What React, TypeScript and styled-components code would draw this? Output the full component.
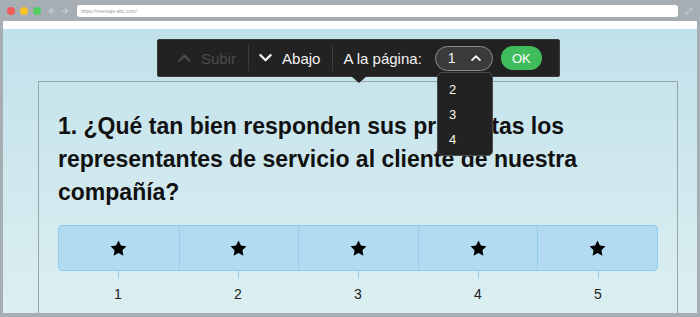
import { createGlobalStyle, styled } from "styled-components";

const Global = createGlobalStyle`
  html, body {
    margin: 0;
    padding: 0;
    background: #a6aeb4;
  }
  * {
    box-sizing: border-box;
  }
  body {
    font-family: "Liberation Sans", Arial, sans-serif;
  }
`;

const Frame = styled.div`
  width: 700px;
  height: 317px;
  padding: 0 3px 4px;
  background: #a6aeb4;
  display: flex;
  flex-direction: column;
  overflow: hidden;
`;

const ChromeBar = styled.div`
  height: 21px;
  display: flex;
  align-items: center;
  padding-left: 4px;
  gap: 6px;
`;

const Light = styled.span<{ $color: string }>`
  width: 8px;
  height: 8px;
  border-radius: 50%;
  background: ${(p) => p.$color};
  margin-right: -1px;
`;

const NavArrows = styled.div`
  display: flex;
  gap: 5px;
  margin-left: 2px;
  color: #c9ced2;
`;

const UrlBar = styled.div`
  flex: 1;
  height: 12px;
  margin-left: 2px;
  background: #fff;
  border-radius: 3px;
  font-size: 5px;
  color: #9aa0a4;
  line-height: 12px;
  padding-left: 4px;
`;

const Resize = styled.div`
  width: 16px;
  margin-left: -3px;
  display: flex;
  justify-content: center;
  color: #c3c9cd;
`;

const Viewport = styled.div`
  flex: 1;
  position: relative;
  border-top: 8px solid #fff;
  background: linear-gradient(180deg, #c1e1ea 0%, #cfe8ee 50%, #dbeff1 100%);
  padding: 52px 19px 0 35px;
  overflow: hidden;
`;

const Card = styled.div`
  position: relative;
  height: 260px;
  border: 1px solid #97a4a9;
  border-bottom: none;
  padding: 28px 19px 0;
`;

const Toolbar = styled.div`
  position: absolute;
  top: -43px;
  left: 118px;
  width: 403px;
  height: 38px;
  background: #222;
  border: 1px solid #3a3a3a;
  border-radius: 2px;
  display: flex;
  align-items: center;
  padding: 0 16px 0 20px;
  color: #f2f2f2;
  font-size: 15px;

  &::before {
    content: "";
    position: absolute;
    left: 180px;
    bottom: -5px;
    width: 41px;
    height: 4px;
    background: #c5e3eb;
  }

  &::after {
    content: "";
    position: absolute;
    left: 193px;
    bottom: -7px;
    border-left: 8px solid transparent;
    border-right: 8px solid transparent;
    border-top: 7px solid #222;
  }
`;

const ToolButton = styled.div<{ $disabled?: boolean }>`
  display: flex;
  align-items: center;
  gap: 10px;
  color: ${(p) => (p.$disabled ? "#4b4b4b" : "#f2f2f2")};
`;

const Divider = styled.span`
  width: 1px;
  height: 26px;
  background: #3c3c3c;
  margin: 0 10px 0 12px;
`;

const Label = styled.span`
  margin-right: 13px;
`;

const PageSelect = styled.div`
  width: 58px;
  height: 25px;
  border: 1.5px solid #8c8c8c;
  border-radius: 13px;
  background: #3b3b3b;
  display: flex;
  align-items: center;
  justify-content: space-between;
  padding: 0 11px 0 12px;
  font-size: 14px;
`;

const OkButton = styled.div`
  margin-left: 8px;
  width: 41px;
  height: 24px;
  border-radius: 12px;
  background: #3fbc5c;
  color: #fff;
  font-size: 13px;
  display: flex;
  align-items: center;
  justify-content: center;
`;

const Dropdown = styled.ul`
  position: absolute;
  top: -10px;
  left: 398px;
  width: 56px;
  margin: 0;
  padding: 4px 0 3px;
  list-style: none;
  background: #222;
  border: 1px solid #4a4a4a;
  border-radius: 5px;
  z-index: 2;
`;

const DropItem = styled.li`
  height: 25px;
  line-height: 25px;
  padding-left: 11px;
  font-size: 13px;
  color: #fbf7e8;
`;

const Question = styled.h2`
  margin: 0;
  font-size: 23px;
  font-weight: bold;
  line-height: 33px;
  color: #111;
`;

const Rating = styled.div`
  margin-top: 16px;
  height: 46px;
  display: grid;
  grid-template-columns: repeat(5, 1fr);
  background: #b2dbf2;
  border: 1px solid #8fcbec;
  border-radius: 4px;
`;

const RatingCell = styled.div`
  display: flex;
  align-items: center;
  justify-content: center;
  & + & {
    border-left: 1px solid #92cdec;
  }
`;

const Scale = styled.div`
  display: grid;
  grid-template-columns: repeat(5, 1fr);
`;

const ScaleItem = styled.div`
  display: flex;
  flex-direction: column;
  align-items: center;
  font-size: 14px;
  color: #222;
`;

const Tick = styled.span`
  width: 1px;
  height: 8px;
  background: #8fcbec;
  margin-bottom: 7px;
`;

const Chevron = ({ up, color, size = 13 }: { up?: boolean; color: string; size?: number }) => (
  <svg width={size} height={size * 0.6} viewBox="0 0 14 8" fill="none">
    <path
      d={up ? "M1.5 7 L7 1.5 L12.5 7" : "M1.5 1 L7 6.5 L12.5 1"}
      stroke={color}
      strokeWidth="2.4"
      strokeLinecap="round"
      strokeLinejoin="round"
    />
  </svg>
);

const Star = () => (
  <svg width="19" height="19" viewBox="0 0 24 24">
    <polygon
      points="12,2 15.09,8.26 22,9.27 17,14.14 18.18,21.02 12,17.77 5.82,21.02 7,14.14 2,9.27 8.91,8.26"
      fill="#000"
    />
  </svg>
);

const values = [1, 2, 3, 4, 5];

export default function App() {
  return (
    <Frame>
      <Global />
      <ChromeBar>
        <Light $color="#f25b56" />
        <Light $color="#f4c327" />
        <Light $color="#4fcd5f" />
        <NavArrows>
          <svg width="8" height="8" viewBox="0 0 9 8">
            <path d="M8 4H1.5M4.5 1L1.5 4L4.5 7" stroke="currentColor" strokeWidth="1.4" fill="none" />
          </svg>
          <svg width="8" height="8" viewBox="0 0 9 8">
            <path d="M1 4H7.5M4.5 1L7.5 4L4.5 7" stroke="currentColor" strokeWidth="1.4" fill="none" />
          </svg>
        </NavArrows>
        <UrlBar>https://mensaje-abc.com/</UrlBar>
        <Resize>
          <svg width="8" height="8" viewBox="0 0 8 8">
            <path d="M1 7L7 1M4 1H7V4M1 4V7H4" stroke="currentColor" strokeWidth="1" fill="none" />
          </svg>
        </Resize>
      </ChromeBar>
      <Viewport>
        <Card>
          <Toolbar>
            <ToolButton $disabled>
              <Chevron up color="#4b4b4b" />
              Subir
            </ToolButton>
            <Divider />
            <ToolButton>
              <Chevron color="#f2f2f2" />
              Abajo
            </ToolButton>
            <Divider />
            <Label>A la página:</Label>
            <PageSelect>
              <span>1</span>
              <Chevron up color="#fff" size={10} />
            </PageSelect>
            <OkButton>OK</OkButton>
          </Toolbar>
          <Dropdown>
            <DropItem>2</DropItem>
            <DropItem>3</DropItem>
            <DropItem>4</DropItem>
          </Dropdown>
          <Question>
            1. ¿Qué tan bien responden sus preguntas los representantes de servicio al cliente de nuestra compañía?
          </Question>
          <Rating>
            {values.map((v) => (
              <RatingCell key={v}>
                <Star />
              </RatingCell>
            ))}
          </Rating>
          <Scale>
            {values.map((v) => (
              <ScaleItem key={v}>
                <Tick />
                {v}
              </ScaleItem>
            ))}
          </Scale>
        </Card>
      </Viewport>
    </Frame>
  );
}
